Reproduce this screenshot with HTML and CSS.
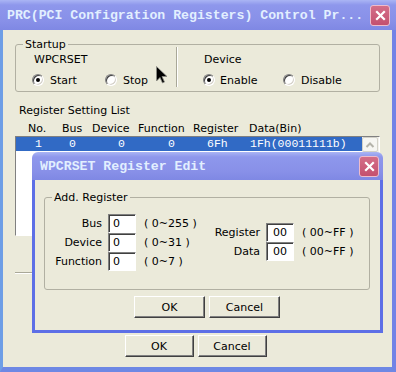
FILE: index.html
```html
<!DOCTYPE html>
<html lang="en">
<head>
  <meta charset="UTF-8">
  <title>PRC Control Panel</title>
  <link rel="stylesheet" href="styles.css">
</head>
<body>
  <div class="window">
    <div class="titlebar">
      <span class="title">PRC(PCI Configration Registers) Control Pr...</span>
      <span class="close">
        <svg width="11" height="11" viewBox="0 0 11 11"><path d="M2 2L9 9M9 2L2 9" stroke="#fff" stroke-width="2.2" stroke-linecap="square"/></svg>
      </span>
    </div>
    <div class="client">
      <fieldset class="group startup">
        <legend>Startup</legend>
        <div class="startup-cols">
          <div class="startup-col">
            <div class="caption">WPCRSET</div>
            <div class="radios">
              <span class="radio-item start-item"><span class="radio checked"></span>Start</span>
              <span class="radio-item"><span class="radio"></span>Stop</span>
            </div>
          </div>
          <div class="device-col">
            <div class="caption">Device</div>
            <div class="radios">
              <span class="radio-item enable-item"><span class="radio checked"></span>Enable</span>
              <span class="radio-item"><span class="radio"></span>Disable</span>
            </div>
          </div>
        </div>
      </fieldset>

      <div class="list-title">Register Setting List</div>
      <div class="list-head">
        <span>No.</span><span>Bus</span><span>Device</span><span>Function</span><span>Register</span><span>Data(Bin)</span>
      </div>
      <div class="listbox">
        <div class="rows">
          <div class="list-row selected">
            <span class="c1">1</span><span class="c2">0</span><span class="c3">0</span><span class="c4">0</span><span class="c5">6Fh</span><span class="c6">1Fh(00011111b)</span>
          </div>
        </div>
        <div class="scrollbar">
          <span class="scroll-up">
            <svg width="14" height="12" viewBox="0 0 14 12"><path d="M3.5 8L7 4.5L10.5 8" fill="none" stroke="#b4b3aa" stroke-width="2"/></svg>
          </span>
        </div>
      </div>
      <div class="separator"></div>

      <div class="buttons">
        <button class="btn">OK</button>
        <button class="btn">Cancel</button>
      </div>
    </div>

    <!-- modal edit dialog over the main window -->
    <div class="dialog">
      <div class="dialog-titlebar">
        <span class="title">WPCRSET Register Edit</span>
        <span class="close">
          <svg width="11" height="11" viewBox="0 0 11 11"><path d="M2 2L9 9M9 2L2 9" stroke="#fff" stroke-width="2.2" stroke-linecap="square"/></svg>
        </span>
      </div>
      <div class="dialog-body">
        <fieldset class="group edit-group">
          <legend>Add. Register</legend>
          <div class="edit-fields">
            <div class="field-grid left-fields">
              <span class="label">Bus</span><span class="field">0</span><span class="range">( 0~255 )</span>
              <span class="label">Device</span><span class="field">0</span><span class="range">( 0~31 )</span>
              <span class="label">Function</span><span class="field">0</span><span class="range">( 0~7 )</span>
            </div>
            <div class="field-grid right-fields">
              <span class="label">Register</span><span class="field wide">00</span><span class="range">( 00~FF )</span>
              <span class="label">Data</span><span class="field wide">00</span><span class="range">( 00~FF )</span>
            </div>
          </div>
        </fieldset>
        <div class="buttons dialog-buttons">
          <button class="btn">OK</button>
          <button class="btn">Cancel</button>
        </div>
      </div>
    </div>

    <svg class="cursor" width="13" height="19" viewBox="0 0 13 19">
      <path d="M0.5 0.5L0.5 15L4 11.5L6.5 17L8.5 16L6 10.5L11 10.5Z" fill="#000" stroke="#8a8a84" stroke-width="0.8"/>
    </svg>
  </div>
</body>
</html>
```

FILE: styles.css
```css
body {
  margin: 0;
  font-family: "DejaVu Sans", sans-serif;
  font-size: 11px;
  color: #000;
}
.window {
  position: relative;
  width: 396px;
  height: 372px;
  display: flex;
  flex-direction: column;
  overflow: hidden;
}

/* Title bars */
.titlebar,
.dialog-titlebar {
  display: flex;
  align-items: center;
  box-sizing: border-box;
  flex: none;
  background: linear-gradient(#aab5f4, #8e97ec 5px, #8890e8 70%, #7f88e4);
}
.titlebar {
  height: 30px;
  padding: 0 6px 0 7px;
}
.title {
  font: bold 13.2px "Liberation Mono", monospace;
  color: #e2efff;
  white-space: nowrap;
}
.close {
  margin-left: auto;
  width: 20px;
  height: 21px;
  box-sizing: border-box;
  border: 1px solid #eebccb;
  border-radius: 3px;
  background: linear-gradient(#d46e88, #c4506f);
  display: flex;
  align-items: center;
  justify-content: center;
}

/* Main client area */
.client {
  flex: 1;
  display: flex;
  flex-direction: column;
  padding: 0 12px;
  background: #ebeada;
  border-style: solid;
  border-width: 0 4px 5px 3px;
  border-color: #7ea0e6 #7283e6 #6e88e4 #6e9ee6;
}
.group {
  margin: 0;
  padding: 0;
  min-width: 0;
  border: 1px solid #b1b0a2;
  border-radius: 3px;
}
.group legend {
  margin-left: 7px;
  padding: 0 2px;
  line-height: 13px;
}
.startup {
  margin-top: 8px;
}
.startup-cols {
  display: flex;
  padding-bottom: 4px;
}
.startup-col {
  width: 160px;
  padding-left: 18px;
  box-sizing: border-box;
}
.device-col {
  flex: 1;
  margin-top: -4px;
  padding: 4px 0 0 27px;
  border-left: 1px solid #a9a898;
  box-shadow: inset 1px 0 #fff;
}
.caption {
  height: 14px;
  line-height: 14px;
  margin-top: 2px;
}
.radios {
  display: flex;
  align-items: center;
  height: 14px;
  margin-top: 6px;
  margin-left: -1px;
}
.startup-col .radios {
  margin-left: -2px;
}
.radio-item {
  display: flex;
  align-items: center;
  gap: 6px;
}
.start-item {
  width: 73px;
}
.enable-item {
  width: 80px;
  gap: 5px;
}
.radio {
  position: relative;
  width: 12px;
  height: 12px;
  box-sizing: border-box;
  border-radius: 50%;
  background: #fff;
  border: 1px solid;
  border-color: #808080 #fff #fff #808080;
  box-shadow: inset 1px 1px #404040, inset -1px -1px #d4d0c8;
}
.radio.checked::after {
  content: "";
  position: absolute;
  left: 3px;
  top: 3px;
  width: 4px;
  height: 4px;
  border-radius: 50%;
  background: #000;
}

/* Register list */
.list-title {
  margin-top: 12px;
  padding-left: 4px;
  line-height: 13px;
}
.list-head,
.list-row {
  display: grid;
  grid-template-columns: 34px 30px 46px 55px 56px auto;
}
.list-head {
  margin-top: 5px;
  padding-left: 13px;
  line-height: 13px;
}
.listbox {
  display: flex;
  margin-top: 1px;
  height: 100px;
  box-sizing: border-box;
  background: #fff;
  border: 1px solid;
  border-color: #808080 #fff #fff #808080;
}
.rows {
  flex: 1;
}
.list-row {
  height: 14px;
  line-height: 14px;
  padding-left: 12px;
  font: 11.5px "Liberation Mono", monospace;
}
.list-row.selected {
  background: #316ac5;
  color: #fff;
}
.c1, .c2 { padding-left: 7px; }
.c3 { padding-left: 26px; }
.c4 { padding-left: 30px; }
.c5 { padding-left: 14px; }
.c6 { padding-left: 1px; }
.scrollbar {
  width: 17px;
  background: #f3f2ec;
}
.scroll-up {
  display: flex;
  align-items: center;
  justify-content: center;
  width: 16px;
  height: 15px;
  box-sizing: border-box;
  border: 1px solid #d2d1c8;
  border-radius: 2px;
  background: #f6f6f2;
}
.separator {
  margin-top: 36px;
  border-top: 1px solid #a9a898;
  border-bottom: 1px solid #fff;
}

/* Buttons */
.buttons {
  display: flex;
  justify-content: center;
  gap: 4px;
  margin-top: 61px;
  padding-right: 4px;
}
.btn {
  width: 69px;
  height: 22px;
  padding: 0;
  font: 11px "DejaVu Sans", sans-serif;
  color: #000;
  background: #ebeada;
  border: 1px solid;
  border-color: #fff #404040 #404040 #fff;
  box-shadow: inset -1px -1px #808080;
}

/* Edit dialog */
.dialog {
  position: absolute;
  left: 32px;
  top: 152px;
  width: 351px;
  height: 181px;
  display: flex;
  flex-direction: column;
}
.dialog-titlebar {
  height: 28px;
  padding: 0 4px 0 8px;
  border-radius: 6px 6px 0 0;
}
.dialog-body {
  flex: 1;
  padding: 0 10px 0 9px;
  background: #ebeada;
  border: 3px solid #5d6fe6;
  border-top: 0;
}
.edit-group {
  margin-top: 11px;
}
.edit-fields {
  display: flex;
  align-items: flex-start;
  height: 85px;
  padding-top: 10px;
  box-sizing: border-box;
}
.field-grid {
  display: grid;
  grid-template-columns: 63px 28px auto;
  grid-auto-rows: 19px;
  align-items: center;
}
.left-fields {
  width: 157px;
}
.right-fields {
  grid-template-columns: 64px 28px auto;
  margin-top: 9px;
}
.label {
  text-align: right;
  padding-right: 6px;
}
.field {
  height: 19px;
  box-sizing: border-box;
  padding-left: 4px;
  line-height: 17px;
  background: #fff;
  border: 1px solid;
  border-color: #808080 #fff #fff #808080;
  box-shadow: inset 1px 1px #404040;
}
.field.wide {
  padding-left: 6px;
}
.range {
  padding-left: 8px;
  white-space: nowrap;
}
.dialog-buttons {
  margin-top: 6px;
  padding-right: 0;
}
.dialog-buttons .btn {
  width: 71px;
}

.cursor {
  position: absolute;
  left: 156px;
  top: 66px;
}
```
